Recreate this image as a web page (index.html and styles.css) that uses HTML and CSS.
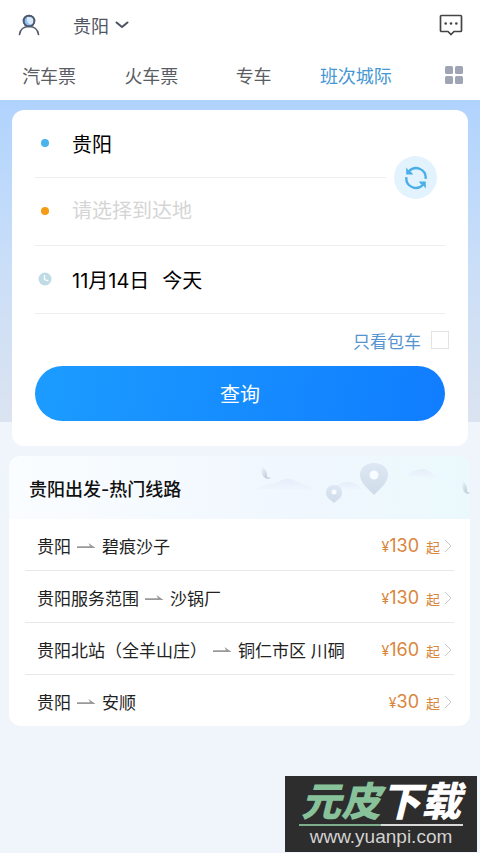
FILE: index.html
```
<!DOCTYPE html>
<html lang="zh-CN">
<head>
<meta charset="utf-8">
<meta name="viewport" content="width=device-width, initial-scale=1">
<title>班次城际</title>
<link rel="stylesheet" href="styles.css">
</head>
<body>
<svg class="defs" aria-hidden="true">
  <symbol id="arrow" viewBox="0 0 19 8"><path d="M0 4.200h13L11.500 1l7 5H0z" fill="#999"/></symbol>
  <symbol id="chevron" viewBox="0 0 8 14"><path d="M1 1l6 6-6 6" fill="none" stroke="#c4c7cd"/></symbol>
</svg>
<header class="top">
  <button class="plain" aria-label="个人中心">
    <svg width="22" height="22" viewBox="0 0 22 22" fill="none" stroke="#505a68" stroke-width="1.700">
      <circle cx="11" cy="7" r="5.400" fill="#8dc2fb"/>
      <path d="M14.500 3.500c1.500 2 1.500 5-.5 7C10 10.500 8.500 7 9 3z" fill="#d9eaff" stroke="none"/>
      <circle cx="11" cy="7" r="5.400"/>
      <path d="M1.500 20.500c.6-5 4.500-8 9.500-8s8.900 3 9.500 8" stroke-linecap="round"/>
    </svg>
  </button>
  <button class="plain city">贵阳
    <svg width="14" height="8" viewBox="0 0 14 8"><path d="M1.500 1.500L7 6l5.500-4.500" fill="none" stroke="#4b5260" stroke-width="2" stroke-linecap="round"/></svg>
  </button>
  <button class="plain message" aria-label="消息">
    <svg width="24" height="22" viewBox="0 0 24 22">
      <path d="M2.500 1.500h19a1 1 0 0 1 1 1v14a1 1 0 0 1-1 1H15l-3 3-3-3H2.500a1 1 0 0 1-1-1v-14a1 1 0 0 1 1-1z" fill="none" stroke="#444" stroke-width="1.700"/>
      <g fill="#444"><circle cx="6.700" cy="9.500" r="1.300"/><circle cx="12" cy="9.500" r="1.300"/><circle cx="17.300" cy="9.500" r="1.300"/></g>
    </svg>
  </button>
</header>
<nav class="tabs">
  <a href="#bus">汽车票</a>
  <a href="#train">火车票</a>
  <a href="#car">专车</a>
  <a href="#intercity" class="active">班次城际</a>
  <button class="plain more" aria-label="更多">
    <svg width="18" height="18" viewBox="0 0 18 18" fill="#a0a5b5"><rect x="0" y="0" width="8" height="8" rx="1.500"/><rect x="10" y="0" width="8" height="8" rx="1.500"/><rect x="0" y="10" width="8" height="8" rx="1.500"/><rect x="10" y="10" width="8" height="8" rx="1.500"/></svg>
  </button>
</nav>
<main>
  <form class="search">
    <div class="field field-from">
      <span class="dot"></span>
      <button type="button" class="plain value">贵阳</button>
    </div>
    <div class="field">
      <span class="dot dot-to"></span>
      <input class="value" type="text" aria-label="到达地" placeholder="请选择到达地">
    </div>
    <div class="field">
      <svg class="clock" width="14" height="14" viewBox="0 0 14 14"><circle cx="7" cy="7" r="6.500" fill="#bfdbe6"/><path d="M6.500 3v4.500l4 1.500" fill="none" stroke="#fff" stroke-width="1.300"/></svg>
      <button type="button" class="plain value date"><span>11月14日</span><span>今天</span></button>
    </div>
    <button type="button" class="plain swap" aria-label="交换">
      <svg width="24" height="24" viewBox="0 0 24 24">
        <g fill="none" stroke="#4aafe8" stroke-width="2.400"><path d="M5 5.200A9.600 9.600 0 0 1 21.600 12.800"/><path d="M19 18.800A9.600 9.600 0 0 1 2.400 11.200"/></g>
        <path d="M2.200 1.500v7h7L7.500 6.200 4.800 4.500zM21.800 22.500v-7h-7l1.700 2.300 2.700 1.700z" fill="#4aafe8"/>
      </svg>
    </button>
    <label class="charter">只看包车<input type="checkbox"></label>
    <button type="button" class="submit">查询</button>
  </form>
  <section class="routes">
    <div class="routes-head">
      <h2>贵阳出发-热门线路</h2>
      <svg class="scene" width="230" height="63" viewBox="0 0 230 63" aria-hidden="true">
        <defs>
          <linearGradient id="pin" x1="0" y1="0" x2="0" y2="1"><stop offset="0" stop-color="#dde8f4"/><stop offset="1" stop-color="#d0dbe9"/></linearGradient>
          <linearGradient id="hill" x1="0" y1="0" x2="0" y2="1"><stop offset="0" stop-color="#e4eefa"/><stop offset="1" stop-color="#eef5fd"/></linearGradient>
          <linearGradient id="leaf" x1="0" y1="0" x2="1" y2="1"><stop offset="0" stop-color="#edf4fb"/><stop offset="1" stop-color="#b2c1d1"/></linearGradient>
        </defs>
        <g fill="url(#hill)">
          <path d="M18 33c8-7 14-4 20-7 11-7 17-1 24 2 7 1 10 4 14 5z"/>
          <path d="M92 33c10-9 20-10 30 0z"/>
          <path d="M166 20c6-4 10-7 17-7s9 7 17 9z"/>
        </g>
        <path d="M22 11c3 1 6 7 5 10l4 1c-6 3-11-3-9-11z" fill="url(#leaf)"/>
        <path d="M223 25c3 2 5 8 4 11l3 1c-6 3-9-5-7-12z" fill="url(#leaf)"/>
        <path fill="url(#pin)" d="M134 39l-9-9c-11-13-2-23 9-23s20 10 9 23z"/>
        <circle cx="134" cy="19" r="4.500" fill="#f8fbff"/>
        <path fill="url(#pin)" d="M94 47l-6-5c-5-7 0-13 6-13s11 6 6 13z"/>
        <circle cx="94" cy="36" r="2.500" fill="#f8fbff"/>
      </svg>
    </div>
    <ul>
      <li><a href="#r1"><span>贵阳</span><svg class="arrow"><use href="#arrow"/></svg><span>碧痕沙子</span><span class="price"><small>¥</small>130</span><span class="from">起</span><svg class="chevron"><use href="#chevron"/></svg></a></li>
      <li><a href="#r2"><span>贵阳服务范围</span><svg class="arrow"><use href="#arrow"/></svg><span>沙锅厂</span><span class="price"><small>¥</small>130</span><span class="from">起</span><svg class="chevron"><use href="#chevron"/></svg></a></li>
      <li><a href="#r3"><span>贵阳北站（全羊山庄）</span><svg class="arrow"><use href="#arrow"/></svg><span>铜仁市区 川硐</span><span class="price"><small>¥</small>160</span><span class="from">起</span><svg class="chevron"><use href="#chevron"/></svg></a></li>
      <li><a href="#r4"><span>贵阳</span><svg class="arrow"><use href="#arrow"/></svg><span>安顺</span><span class="price"><small>¥</small>30</span><span class="from">起</span><svg class="chevron"><use href="#chevron"/></svg></a></li>
    </ul>
  </section>
</main>
<aside class="badge">
  <div class="badge-name"><span>元皮</span>下载</div>
  <div class="badge-url">www.yuanpi.com</div>
</aside>
</body>
</html>
```
FILE: styles.css
```
* {
  box-sizing: border-box;
}

body {
  margin: 0;
  min-height: 100vh;
  background: #f0f4fb;
  color: #222;
  font-family: Inter, "Noto Sans CJK SC", sans-serif;
  font-size: 18px;
}

a {
  color: inherit;
  text-decoration: none;
}

.defs {
  display: none;
}

.plain {
  display: flex;
  align-items: center;
  padding: 0;
  border: 0;
  background: none;
  color: inherit;
  font: inherit;
}

.top {
  display: flex;
  align-items: center;
  height: 50px;
  padding: 0 17px 0 18px;
  background: #fff;
  color: #4f5662;
}

.city {
  gap: 6px;
  margin-left: 33px;
}

.message {
  margin-left: auto;
}

.tabs {
  display: grid;
  grid-template-columns: repeat(4, 1fr) 44px;
  column-gap: 24px;
  align-items: center;
  height: 50px;
  padding: 0 17px 0 10px;
  background: #fff;
  color: #5a5d63;
  text-align: center;
  white-space: nowrap;
}

.tabs .active {
  color: #4597d3;
}

.more {
  justify-content: flex-end;
}

main {
  padding: 10px;
  background: linear-gradient(#b0d3fe, #c9def8 160px, #dbe3f0 322px, transparent 322px) no-repeat;
}

.search {
  position: relative;
  margin: 0 2px 10px;
  padding: 0 23px 25px;
  border-radius: 12px;
  background: #fff;
}

.field {
  display: flex;
  align-items: center;
  height: 68px;
  padding-bottom: 1px;
  border-bottom: 1px solid #ededed;
  color: #000;
  font-size: 20px;
}

.field-from {
  margin-right: 59px;
}

.dot {
  width: 8px;
  height: 8px;
  margin: 0 23px 0 6px;
  border-radius: 50%;
  background: #4bb2ea;
}

.dot-to {
  background: #f59b16;
}

.clock {
  margin: 0 20px 0 3px;
}

.value {
  flex: 1;
  min-width: 0;
  padding: 0;
  border: 0;
  outline: 0;
  background: none;
  color: #000;
  font: inherit;
}

.value::placeholder {
  color: #d5d5d5;
}

.date {
  gap: 13px;
}

.swap {
  position: absolute;
  top: 46px;
  right: 31px;
  justify-content: center;
  width: 43px;
  height: 43px;
  border-radius: 50%;
  background: #e3f3fe;
}

.charter {
  display: flex;
  justify-content: flex-end;
  align-items: center;
  gap: 10px;
  height: 52px;
  margin-right: -4px;
  color: #5694cf;
  font-size: 17px;
}

.charter input {
  width: 18px;
  height: 18px;
  margin: 0;
  appearance: none;
  border: 1px solid #e3e3e3;
  background: #fff;
}

.submit {
  display: block;
  width: 100%;
  height: 55px;
  border: 0;
  border-radius: 28px;
  background: linear-gradient(100deg, #1c9cff, #107dff);
  color: #fff;
  font: inherit;
  font-size: 20px;
}

.routes {
  overflow: hidden;
  margin: 0 0 0 -1px;
  border-radius: 12px;
  background: #fff;
}

.routes-head {
  display: flex;
  justify-content: space-between;
  align-items: center;
  height: 63px;
  padding-left: 20px;
  background: linear-gradient(90deg, #fafdff, #f0f7fe 60%, #ebf9fc);
}

.routes h2 {
  margin: 0;
  color: #111;
  font-size: 18px;
  font-weight: 500;
  white-space: nowrap;
}

.routes ul {
  margin: 0;
  padding: 0 16px;
  list-style: none;
}

.routes li + li {
  border-top: 1px solid #e8e8e8;
}

.routes li a {
  display: flex;
  align-items: center;
  height: 51px;
  padding: 2px 2px 0 12px;
  font-size: 17px;
  white-space: nowrap;
}

.arrow {
  width: 19px;
  height: 8px;
  margin: 0 6px;
}

.price {
  margin-left: auto;
  color: #d9853b;
  font-size: 18px;
}

.price small {
  font-size: 14px;
}

.from {
  margin: 2px 4px 0 7px;
  color: #d9853b;
  font-size: 14px;
}

.chevron {
  width: 8px;
  height: 14px;
}

.badge {
  position: fixed;
  right: 3px;
  bottom: 1px;
  width: 192px;
  height: 76px;
  padding: 6px 14px 0;
  background: #2d2d2d;
  color: #fff;
  text-align: center;
  white-space: nowrap;
}

.badge-name {
  padding-bottom: 2px;
  border-bottom: 2px solid;
  border-image: linear-gradient(90deg, #7cae8b 50%, #d8d8d8 50%) 1;
  font-size: 40px;
  font-style: italic;
  font-weight: 900;
  line-height: 40px;
}

.badge-name span {
  color: #88c29b;
}

.badge-url {
  color: #d2d2d2;
  font-family: "Liberation Sans", sans-serif;
  font-size: 19px;
  line-height: 22px;
}
```
